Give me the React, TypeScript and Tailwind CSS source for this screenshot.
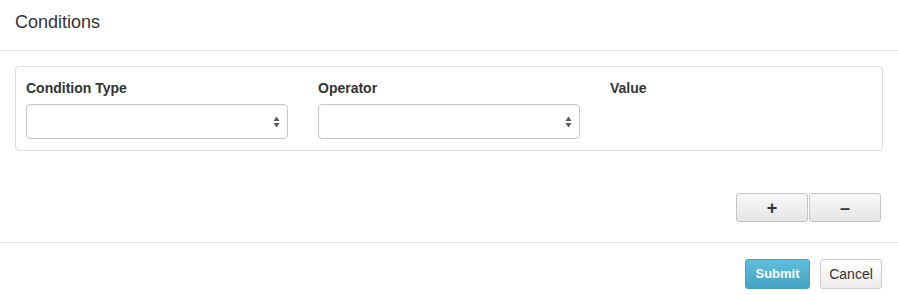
import React from "react";

function Arrows() {
  return (
    <svg width="7" height="12" viewBox="0 0 7 12" className="absolute right-[7px] top-1/2 -translate-y-1/2">
      <path d="M3.5 0.5 L6.5 5 L0.5 5 Z" fill="#5a5a5a" />
      <path d="M3.5 11.5 L6.5 7 L0.5 7 Z" fill="#5a5a5a" />
    </svg>
  );
}

function Field({ label, select }: { label: string; select: boolean }) {
  return (
    <div className="flex flex-col">
      <div className="text-[14px] leading-[20px] font-bold text-[#333]">{label}</div>
      {select && (
        <div className="relative mt-[6px] h-[35px] rounded-[4px] border border-[#c8c8c8] bg-white shadow-[inset_0_1px_1px_rgba(0,0,0,0.04)]">
          <Arrows />
        </div>
      )}
    </div>
  );
}

export default function App() {
  return (
    <div className="w-[898px] h-[295px] overflow-hidden bg-white text-[#333]" style={{ fontFamily: '"Liberation Sans", Arial, sans-serif' }}>
      <div className="h-[51px] border-b border-[#e5e5e5] px-[15px] pt-[12px]">
        <div className="text-[18px] leading-[20px] text-[#333]">Conditions</div>
      </div>
      <div className="px-[15px] pt-[15px] pb-[20px]">
        <div className="rounded-[4px] border border-[#dddddd] px-[10px] pt-[11px] pb-[11px]">
          <div className="grid grid-cols-3 gap-[30px]">
            <Field label="Condition Type" select />
            <Field label="Operator" select />
            <Field label="Value" select={false} />
          </div>
        </div>
        <div className="mt-[42px] mr-[2px] flex justify-end gap-[1px]">
          <button className="h-[29px] w-[72px] rounded-[3px] border border-[#c6c6c6] bg-gradient-to-b from-[#f8f8f8] to-[#e6e6e6] text-[18px] font-bold leading-none text-[#333]">+</button>
          <button className="h-[29px] w-[72px] rounded-[3px] border border-[#c6c6c6] bg-gradient-to-b from-[#f8f8f8] to-[#e6e6e6] text-[18px] font-bold leading-none text-[#333]">–</button>
        </div>
      </div>
      <div className="border-t border-[#e5e5e5] px-[15px] pt-[16px] flex justify-end gap-[10px]">
        <div className="mr-[1px] flex gap-[10px]">
          <button className="h-[30px] w-[65px] rounded-[3px] border border-[#46a1c0] bg-gradient-to-b from-[#60bfdc] to-[#45a1c1] text-[13px] font-bold text-white">Submit</button>
          <button className="h-[30px] w-[62px] rounded-[3px] border border-[#cccccc] bg-gradient-to-b from-[#ffffff] to-[#ebebeb] text-[14px] text-[#333]">Cancel</button>
        </div>
      </div>
    </div>
  );
}
